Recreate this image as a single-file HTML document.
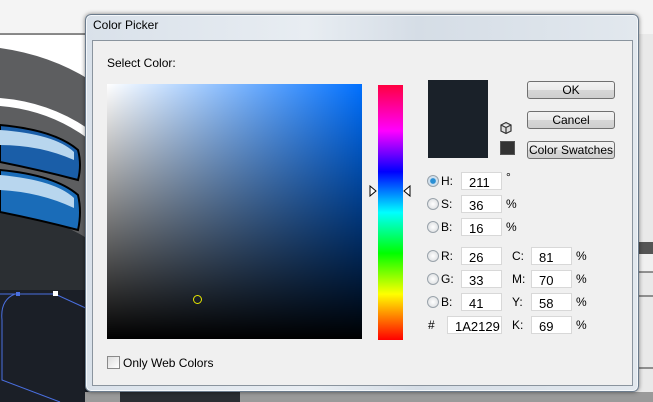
<!DOCTYPE html>
<html><head><meta charset="utf-8"><style>
*{margin:0;padding:0;box-sizing:border-box}
body{width:653px;height:402px;overflow:hidden;position:relative;background:#d8d8d8;font-family:"Liberation Sans",sans-serif;font-size:12px;color:#000}
.a{position:absolute}
.dlg{left:85px;top:14px;width:554px;height:378px;border:1px solid #6b7b8c;border-radius:6px;background:linear-gradient(90deg,#d9e1ea,#e8edf2 40%,#d5dde6 60%,#e2e8ee);box-shadow:0 0 4px rgba(0,0,0,.5), inset 0 0 0 1px #f4f7fa}
.panel{left:92px;top:40px;width:541px;height:346px;background:#f0f0f0;border:1px solid #8a949e}
.inp{position:absolute;width:41px;height:18px;background:#fff;border:1px solid #d8d8d8;padding:2px 0 0 7px;font-size:13px}
.lbl{position:absolute;font-size:12px}
.rad{position:absolute;width:12px;height:12px;border-radius:50%;border:1px solid #9aa3ab;background:radial-gradient(#fff,#d6d9dc)}
.btn{position:absolute;left:527px;width:88px;height:18px;border:1px solid #707070;border-radius:3px;background:linear-gradient(#f2f2f2,#ebebeb 50%,#d6d6d6 51%,#cfcfcf);text-align:center;font-size:12px;line-height:16px}
</style></head><body>
<svg class="a" style="left:0;top:0" width="653" height="402">
<rect width="653" height="402" fill="#e9e9e9"/>
<rect x="0" y="0" width="653" height="34" fill="#f4f4f4"/>
<line x1="0" y1="34" x2="90" y2="34" stroke="#222" stroke-width="1"/>
<rect x="0" y="35" width="90" height="367" fill="#fff"/>
<path d="M0 48 Q50 55 90 80 L90 402 L0 402Z" fill="#5d5e60"/>
<path d="M0 98 Q50 102 90 130 L90 140 Q50 110 0 106Z" fill="#fff"/>
<path d="M0 210 Q50 215 90 240 L90 402 L0 402Z" fill="#2b2f33"/>
<path d="M0 125 Q55 130 78 150 Q82 165 78 180 Q40 170 0 162Z" fill="#1a5ea8" stroke="#000" stroke-width="2"/>
<path d="M0 130 Q55 134 74 152 L74 160 Q40 145 0 145Z" fill="#b8d6ee"/>
<path d="M0 170 Q55 175 78 195 Q82 212 78 230 Q40 220 0 212Z" fill="#1a6cb8" stroke="#000" stroke-width="2"/>
<path d="M0 175 Q55 180 74 198 L74 208 Q40 192 0 190Z" fill="#b8d6ee"/>
<path d="M0 290 L90 290 L90 402 L0 402Z" fill="#1b1f27"/>
<path d="M0 294 L55 294 L90 310" stroke="#4a6fe0" fill="none"/>
<path d="M15 294 Q0 300 2 320 L2 380 L60 402" stroke="#4a6fe0" fill="none"/>
<rect x="53" y="291" width="5" height="5" fill="#fff"/>
<rect x="16" y="292" width="4" height="4" fill="#4a6fe0"/>
<rect x="639" y="242" width="14" height="12" fill="#555"/>
<rect x="639" y="254" width="14" height="18" fill="#f0f0f0"/>
<line x1="639" y1="272" x2="653" y2="272" stroke="#333"/>
<line x1="639" y1="296" x2="653" y2="296" stroke="#333"/>
<line x1="639" y1="368" x2="653" y2="368" stroke="#333"/>
<rect x="85" y="392" width="568" height="10" fill="#9a9a9a"/>
<rect x="120" y="392" width="120" height="10" fill="#2a2d32"/>
</svg>
<div class="a dlg"></div>
<div class="a" style="left:93px;top:18px;font-size:12px;color:#000">Color Picker</div>
<div class="a panel"></div>
<div class="a" style="left:107px;top:56px">Select Color:</div>
<div class="a" style="left:107px;top:84px;width:255px;height:255px;background:linear-gradient(to bottom,rgba(0,0,0,0),#000),linear-gradient(to right,#fff,#0070ff)"></div>
<div class="a" style="left:193px;top:295px;width:9px;height:9px;border:1px solid #e6e600;border-radius:50%"></div>
<div class="a" style="left:378px;top:85px;width:25px;height:255px;background:linear-gradient(#ff0040,#ff00ff 18%,#0000ff 34%,#00ffff 50%,#00ff00 66%,#ffff00 82%,#ff0000)"></div>
<svg class="a" style="left:368px;top:185px" width="45" height="12"><path d="M2 1 L8 6 L2 11Z" fill="#fff" stroke="#000"/><path d="M42 1 L36 6 L42 11Z" fill="#fff" stroke="#000"/></svg>
<div class="a" style="left:428px;top:80px;width:60px;height:78px;background:#1a2129"></div>
<svg class="a" style="left:499px;top:121px" width="14" height="14"><path d="M2 4 L7 1.5 L12 4 L12 10 L7 12.5 L2 10Z M2 4 L7 6.5 L12 4 M7 6.5 L7 12.5" fill="#ddd" stroke="#333" stroke-width="1.2"/></svg>
<div class="a" style="left:500px;top:141px;width:15px;height:14px;background:#333;border:1px solid #555"></div>
<div class="btn" style="top:81px">OK</div>
<div class="btn" style="top:111px">Cancel</div>
<div class="btn" style="top:141px">Color Swatches</div>
<div class="rad" style="left:427px;top:175px;background:radial-gradient(#2a8fd4 35%,#cfe0ee 45%)"></div>
<div class="lbl" style="left:441px;top:174px">H:</div><div class="inp" style="left:461px;top:172px">211</div><div class="lbl" style="left:506px;top:170px">°</div>
<div class="rad" style="left:427px;top:198px"></div>
<div class="lbl" style="left:441px;top:197px">S:</div><div class="inp" style="left:461px;top:195px">36</div><div class="lbl" style="left:506px;top:197px">%</div>
<div class="rad" style="left:427px;top:221px"></div>
<div class="lbl" style="left:441px;top:220px">B:</div><div class="inp" style="left:461px;top:218px">16</div><div class="lbl" style="left:506px;top:220px">%</div>
<div class="rad" style="left:427px;top:250px"></div>
<div class="lbl" style="left:441px;top:249px">R:</div><div class="inp" style="left:461px;top:247px">26</div>
<div class="rad" style="left:427px;top:273px"></div>
<div class="lbl" style="left:441px;top:272px">G:</div><div class="inp" style="left:461px;top:270px">33</div>
<div class="rad" style="left:427px;top:296px"></div>
<div class="lbl" style="left:441px;top:295px">B:</div><div class="inp" style="left:461px;top:293px">41</div>
<div class="lbl" style="left:428px;top:318px">#</div><div class="inp" style="left:447px;top:316px;width:55px">1A2129</div>
<div class="lbl" style="left:512px;top:249px">C:</div><div class="inp" style="left:531px;top:247px">81</div><div class="lbl" style="left:576px;top:249px">%</div>
<div class="lbl" style="left:512px;top:272px">M:</div><div class="inp" style="left:531px;top:270px">70</div><div class="lbl" style="left:576px;top:272px">%</div>
<div class="lbl" style="left:512px;top:295px">Y:</div><div class="inp" style="left:531px;top:293px">58</div><div class="lbl" style="left:576px;top:295px">%</div>
<div class="lbl" style="left:512px;top:318px">K:</div><div class="inp" style="left:531px;top:316px">69</div><div class="lbl" style="left:576px;top:318px">%</div>
<div class="a" style="left:107px;top:356px;width:13px;height:13px;border:1px solid #8a8a8a;background:linear-gradient(135deg,#ddd,#fff)"></div>
<div class="a" style="left:123px;top:356px">Only Web Colors</div>
</body></html>
